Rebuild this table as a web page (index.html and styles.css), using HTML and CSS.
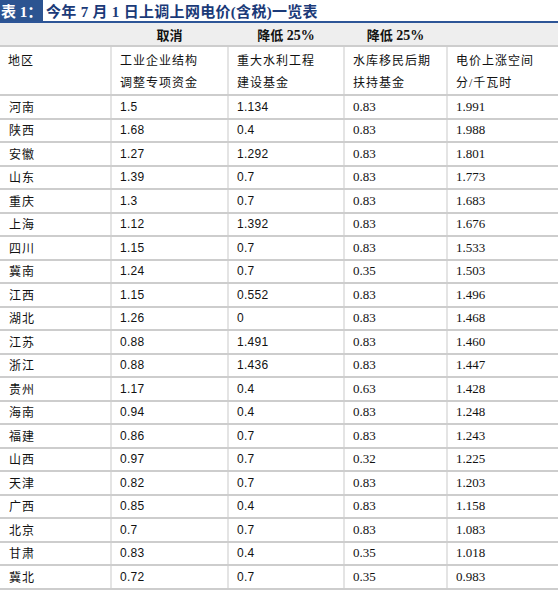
FILE: index.html
```html
<!DOCTYPE html>
<html lang="zh">
<head>
<meta charset="utf-8">
<link rel="stylesheet" href="styles.css">
</head>
<body>
<div class="title">
  <span class="tag">表 1：</span><span class="caption">今年 7 月 1 日上调上网电价(含税)一览表</span>
</div>
<table class="grid">
  <colgroup>
    <col class="c1"><col class="c2"><col class="c3"><col class="c4"><col class="c5">
  </colgroup>
  <thead>
    <tr class="group">
      <th></th><th>取消</th><th>降低 <span class="num">25%</span></th><th>降低 <span class="num">25%</span></th><th></th>
    </tr>
    <tr class="heads">
      <td>地区</td>
      <td>工业企业结构<br>调整专项资金</td>
      <td>重大水利工程<br>建设基金</td>
      <td>水库移民后期<br>扶持基金</td>
      <td>电价上涨空间<br>分/千瓦时</td>
    </tr>
  </thead>
  <tbody>
    <tr><td>河南</td><td>1.5</td><td>1.134</td><td>0.83</td><td>1.991</td></tr>
    <tr><td>陕西</td><td>1.68</td><td>0.4</td><td>0.83</td><td>1.988</td></tr>
    <tr><td>安徽</td><td>1.27</td><td>1.292</td><td>0.83</td><td>1.801</td></tr>
    <tr><td>山东</td><td>1.39</td><td>0.7</td><td>0.83</td><td>1.773</td></tr>
    <tr><td>重庆</td><td>1.3</td><td>0.7</td><td>0.83</td><td>1.683</td></tr>
    <tr><td>上海</td><td>1.12</td><td>1.392</td><td>0.83</td><td>1.676</td></tr>
    <tr><td>四川</td><td>1.15</td><td>0.7</td><td>0.83</td><td>1.533</td></tr>
    <tr><td>冀南</td><td>1.24</td><td>0.7</td><td>0.35</td><td>1.503</td></tr>
    <tr><td>江西</td><td>1.15</td><td>0.552</td><td>0.83</td><td>1.496</td></tr>
    <tr><td>湖北</td><td>1.26</td><td>0</td><td>0.83</td><td>1.468</td></tr>
    <tr><td>江苏</td><td>0.88</td><td>1.491</td><td>0.83</td><td>1.460</td></tr>
    <tr><td>浙江</td><td>0.88</td><td>1.436</td><td>0.83</td><td>1.447</td></tr>
    <tr><td>贵州</td><td>1.17</td><td>0.4</td><td>0.63</td><td>1.428</td></tr>
    <tr><td>海南</td><td>0.94</td><td>0.4</td><td>0.83</td><td>1.248</td></tr>
    <tr><td>福建</td><td>0.86</td><td>0.7</td><td>0.83</td><td>1.243</td></tr>
    <tr><td>山西</td><td>0.97</td><td>0.7</td><td>0.32</td><td>1.225</td></tr>
    <tr><td>天津</td><td>0.82</td><td>0.7</td><td>0.83</td><td>1.203</td></tr>
    <tr><td>广西</td><td>0.85</td><td>0.4</td><td>0.83</td><td>1.158</td></tr>
    <tr><td>北京</td><td>0.7</td><td>0.7</td><td>0.83</td><td>1.083</td></tr>
    <tr><td>甘肃</td><td>0.83</td><td>0.4</td><td>0.35</td><td>1.018</td></tr>
    <tr><td>冀北</td><td>0.72</td><td>0.7</td><td>0.35</td><td>0.983</td></tr>
  </tbody>
</table>
</body>
</html>
```
FILE: styles.css
```css
* { box-sizing: border-box; }
html, body { margin: 0; padding: 0; background: #fff; }
body {
  width: 558px;
  font-family: "Liberation Serif", "Noto Sans CJK SC", serif;
  color: #111;
}
.title {
  display: flex;
  align-items: center;
  height: 23px;
  border-bottom: 2px solid #2d5597;
  font-weight: bold;
  font-size: 15px;
  font-family: "Liberation Serif", "Noto Sans CJK SC", serif;
}
.tag {
  background: #2c5491;
  color: #fff;
  height: 21px;
  width: 43px;
  display: flex;
  align-items: center;
  padding-left: 1px;
  white-space: nowrap;
}
.caption {
  color: #1b3a78;
  padding-left: 3px;
  white-space: nowrap;
  letter-spacing: 0.3px;
}
.grid {
  width: 558px;
  border-collapse: collapse;
  table-layout: fixed;
  font-size: 12px;
}
.c1 { width: 111px; }
.c2 { width: 117px; }
.c3 { width: 116px; }
.c4 { width: 103px; }
.c5 { width: 111px; }
.group th {
  background: #eeeeee;
  height: 23px;
  font-weight: bold;
  font-size: 13px;
  text-align: center;
  padding: 0;
  border-bottom: 2px solid #cdcdcd;
}
.group .num { font-family: "Liberation Serif", serif; font-size: 14px; }
.heads td {
  height: 47px;
  line-height: 22px;
  vertical-align: top;
  padding-top: 3px;
}
td {
  padding: 0 0 0 8px;
  height: 23.5px;
  letter-spacing: 1px;
  border-bottom: 2px solid #cdcdcd;
  border-left: 2px solid #e4e4e4;
  white-space: nowrap;
}
td:first-child { border-left: none; }
tbody td:nth-child(2), tbody td:nth-child(3) {
  font-family: "Liberation Sans", sans-serif;
  font-size: 12px;
  letter-spacing: 0.3px;
}
tbody td:nth-child(4), tbody td:nth-child(5) {
  font-family: "Liberation Serif", serif;
  font-size: 13px;
  letter-spacing: 0;
}
tbody td:first-child { padding-left: 9px; }
```
